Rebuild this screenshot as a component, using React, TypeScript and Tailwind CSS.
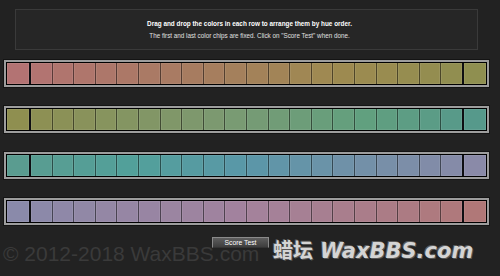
import React from 'react'

type Stop = [number, string]

// key colours picked from the reference, interpolated across each tray
const rows: Stop[][] = [
  [[0, '#b37373'], [0.35, '#a87b62'], [0.7, '#9e8a50'], [1, '#8f8f50']],
  [[0, '#8f8f50'], [0.45, '#7b9a72'], [0.75, '#62a07e'], [1, '#56998b']],
  [[0, '#5a9c90'], [0.25, '#52a09a'], [0.5, '#5a97a8'], [1, '#8a8aa8']],
  [[0, '#8a8aaa'], [0.5, '#a3829d'], [1, '#b07878']],
]

const hex = (h: string) => [1, 3, 5].map(i => parseInt(h.slice(i, i + 2), 16))

const colorAt = (stops: Stop[], t: number) => {
  for (let i = 0; i < stops.length - 1; i++) {
    const [t0, c0] = stops[i]
    const [t1, c1] = stops[i + 1]
    if (t >= t0 && t <= t1) {
      const k = (t - t0) / (t1 - t0)
      const a = hex(c0)
      const b = hex(c1)
      const m = a.map((v, j) => Math.round(v + (b[j] - v) * k))
      return `rgb(${m[0]}, ${m[1]}, ${m[2]})`
    }
  }
  return stops[stops.length - 1][1]
}

const CHIPS = 22

const Chip = ({ color, edge }: { color: string; edge?: boolean }) => (
  <div
    className={
      edge
        ? 'w-[22px] h-full shadow-[inset_0_0_0_1px_rgba(255,255,255,0.08)]'
        : 'flex-1 h-full border-r border-black/50 last:border-r-0 shadow-[inset_0_0_0_1px_rgba(255,255,255,0.08)]'
    }
    style={{ backgroundColor: color }}
  />
)

const Tray = ({ stops }: { stops: Stop[] }) => {
  const colors = Array.from({ length: CHIPS }, (_, i) => colorAt(stops, i / (CHIPS - 1)))
  return (
    <div className="ml-[4px] w-[485px] h-[27px] border-2 border-[#9d9d9d] shadow-[0_0_0_1px_#141414]">
      <div className="h-full border border-black flex">
        <Chip color={colors[0]} edge />
        <div className="w-[2px] bg-[#0e0e12]" />
        <div className="flex-1 flex">
          {colors.slice(1, CHIPS - 1).map((c, i) => (
            <Chip key={i} color={c} />
          ))}
        </div>
        <div className="w-[2px] bg-[#0e0e12]" />
        <Chip color={colors[CHIPS - 1]} edge />
      </div>
    </div>
  )
}

export default function App() {
  return (
    <div className="relative w-[500px] h-[276px] overflow-hidden bg-[#222222] pt-[9px] font-['Liberation_Sans',Arial,sans-serif]">
      {/* instructions */}
      <div className="ml-[15px] w-[463px] h-[41px] border border-[#3a3a3a] bg-[#262626] flex flex-col items-center justify-center gap-[4px] pl-[6px]">
        <p className="text-[6.4px] leading-[8px] font-bold text-white">
          Drag and drop the colors in each row to arrange them by hue order.
        </p>
        <p className="text-[6.3px] leading-[8px] text-[#e0e0e0]">
          The first and last color chips are fixed. Click on "Score Test" when done.
        </p>
      </div>

      {/* trays */}
      <div className="mt-[10px] flex flex-col gap-[19px]">
        {rows.map((r, i) => (
          <Tray key={i} stops={r} />
        ))}
      </div>

      <div className="relative z-10 mt-[12px] pl-[212px]">
        <button className="w-[57px] h-[11px] border border-[#8a8a8a] border-b-[#333] bg-gradient-to-b from-[#5e5e5e] to-[#3e3e3e] text-white text-[6.8px] leading-[9px] flex items-center justify-center">
          Score Test
        </button>
      </div>

      {/* watermarks */}
      <div className="absolute left-[3px] top-[243px] text-[21px] leading-[22px] text-[#3a3a3a] whitespace-nowrap">
        © 2012-2018 WaxBBS.com
      </div>
      <div className="absolute left-[273px] top-[238px] text-[20px] leading-[26px] font-bold text-[#d4d4d4] whitespace-nowrap font-['DejaVu_Sans','Noto_Sans_CJK_SC',sans-serif] [text-shadow:1px_1px_0_#555,-1px_-1px_0_#5a5a5a]">
        蜡坛 <span className="italic text-[21px]">WaxBBS.com</span>
      </div>
    </div>
  )
}
